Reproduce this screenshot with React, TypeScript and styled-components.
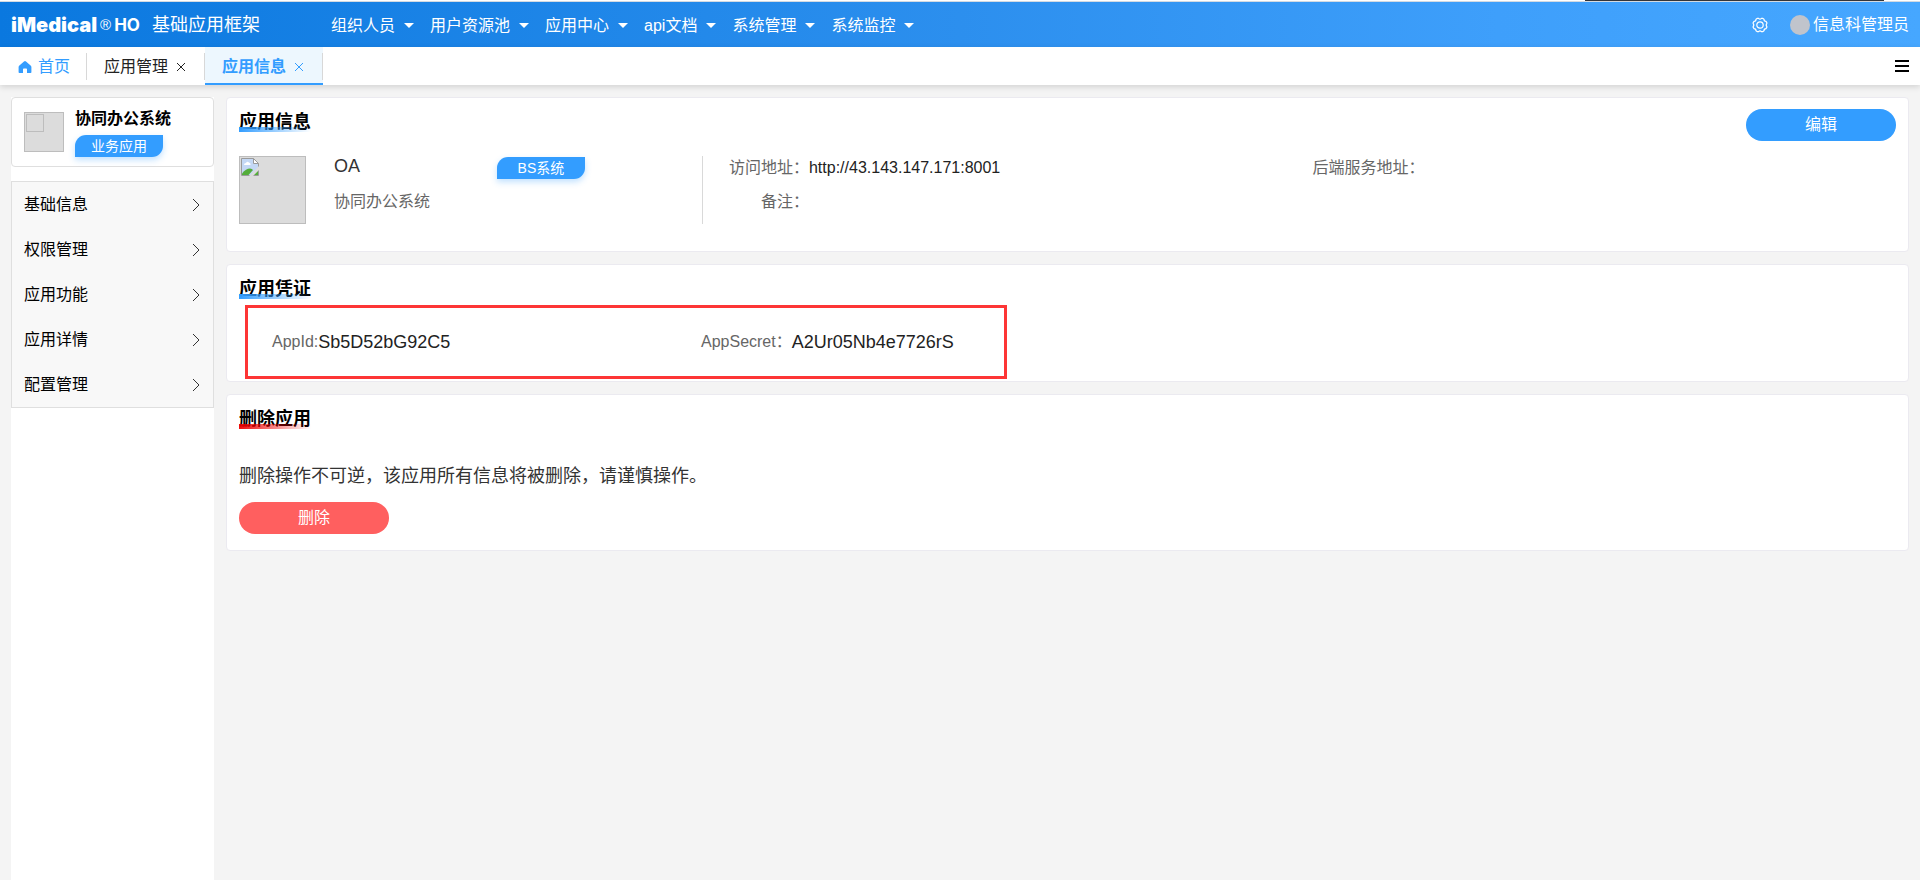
import React from "react";
import styled, { createGlobalStyle, css } from "styled-components";

const GlobalStyle = createGlobalStyle`
  *, *::before, *::after { box-sizing: border-box; }
  body {
    margin: 0;
    background: #f4f4f4;
    color: #000;
    font: 16px/24px "Liberation Sans", "Noto Sans CJK SC", sans-serif;
  }
  h1, h2, p, ul, dl, dd { margin: 0; padding: 0; }
  ul { list-style: none; }
  a { color: inherit; text-decoration: none; }
  button { font: inherit; border: 0; padding: 0; background: none; color: inherit; cursor: pointer; }
  svg { display: block; flex: none; }
`;

const Page = styled.div`
  display: flex;
  flex-direction: column;
  min-height: 100vh;
`;

const WindowEdge = styled.div`
  display: flex;
  justify-content: flex-end;
  height: 2px;
  padding-right: 36px;
  background: #fff;
  border-bottom: 1px solid #d3dae2;
`;

const WindowHandle = styled.span`
  width: 299px;
  background: #33353a;
`;

const Header = styled.header`
  display: flex;
  align-items: center;
  height: 45px;
  padding: 0 11px;
  color: #fff;
  background: linear-gradient(90deg, #0a78df 0%, #2c8fee 50%, #3e9ffb 78%, #46a7ff 100%);
`;

const Brand = styled.a`
  display: flex;
  align-items: center;
  width: 320px;
  white-space: nowrap;
`;

const BrandName = styled.span`
  font: 900 20px/24px Inter, "Liberation Sans", sans-serif;
`;

const BrandMark = styled.span`
  margin: 0 3px;
  font: 15px/20px "Liberation Sans", sans-serif;
`;

const BrandSuffix = styled.span`
  font: 700 17px/24px Inter, "Liberation Sans", sans-serif;
`;

const BrandTitle = styled.span`
  margin-left: 12px;
  font-size: 18px;
`;

const Nav = styled.nav`
  display: flex;
  flex: 1;
  gap: 16px;
  padding-top: 2px;
`;

const NavButton = styled.button`
  display: flex;
  align-items: center;
  gap: 9px;
  white-space: nowrap;
`;

const Caret = styled.span`
  border: 5px solid transparent;
  border-top-color: #fff;
  border-bottom: 0;
`;

const Tools = styled.div`
  display: flex;
  align-items: center;
  gap: 22px;
`;

const User = styled.button`
  display: flex;
  align-items: center;
  gap: 3px;
  white-space: nowrap;
`;

const Avatar = styled.span`
  width: 20px;
  height: 20px;
  border-radius: 50%;
  background: #c0c4cc;
`;

const TabBar = styled.div`
  display: flex;
  align-items: center;
  height: 38px;
  padding-right: 11px;
  background: #fff;
  box-shadow: 0 2px 6px rgba(0, 0, 0, 0.14);
`;

const Tabs = styled.nav`
  display: flex;
  flex: 1;
  align-self: stretch;
`;

const Tab = styled.div<{ $active?: boolean }>`
  display: flex;
  align-items: center;
  gap: 8px;
  padding: 1px 19px 0 17px;
  position: relative;
  color: #222;
  &::after {
    content: "";
    position: absolute;
    right: 0;
    top: 6px;
    bottom: 5px;
    width: 1px;
    background: #d8d8d8;
  }
  ${(p) =>
    p.$active &&
    css`
      color: #339dff;
      font-weight: 700;
      background: #edf7fe;
      box-shadow: inset 0 -2px #339dff;
    `}
`;

const HomeTab = styled(Tab)`
  gap: 6px;
  padding: 1px 17px 0 18px;
  color: #339dff;
`;

const Body = styled.div`
  display: flex;
  flex: 1;
  gap: 12px;
  padding: 12px 11px 0;
`;

const Sidebar = styled.aside`
  flex: none;
  width: 203px;
  background: #fff;
`;

const AppCard = styled.div`
  display: flex;
  gap: 11px;
  height: 70px;
  padding: 7px 12px;
  border: 1px solid #dfdfdf;
  border-radius: 4px;
`;

const AppName = styled.h1`
  margin-bottom: 2px;
  font-size: 16px;
  line-height: 28px;
`;

const Placeholder = styled.div<{ $small?: boolean }>`
  flex: none;
  width: ${(p) => (p.$small ? 40 : 67)}px;
  height: ${(p) => (p.$small ? 40 : 68)}px;
  margin-top: ${(p) => (p.$small ? 7 : 0)}px;
  padding: 1px;
  border: 1px solid #bdbdbd;
  background: #dcdcdc;
`;

const EmptyFrame = styled.span`
  display: block;
  width: 18px;
  height: 18px;
  border: 1px solid #bdbdbd;
`;

const Badge = styled.span`
  display: block;
  width: 88px;
  height: 22px;
  border-radius: 11px 0;
  color: #fff;
  background: #339dff;
  box-shadow: 0 3px 6px rgba(51, 157, 255, 0.3);
  font-size: 14px;
  line-height: 22px;
  text-align: center;
`;

const Menu = styled.ul`
  margin-top: 14px;
  border: 1px solid #dfdfdf;
  background: #f8f8f8;
`;

const MenuLink = styled.a`
  display: flex;
  align-items: center;
  justify-content: space-between;
  height: 45px;
  padding: 0 13px 0 12px;
`;

const Main = styled.main`
  display: flex;
  flex: 1;
  flex-direction: column;
  gap: 12px;
`;

const Card = styled.section`
  padding: 11px 12px;
  border: 1px solid #ebeaf0;
  border-radius: 4px;
  background: #fff;
`;

const CardHead = styled.div`
  display: flex;
  align-items: flex-start;
  justify-content: space-between;
`;

const Title = styled.h2<{ $danger?: boolean }>`
  position: relative;
  width: max-content;
  font-size: 18px;
  line-height: 26px;
  &::after {
    content: "";
    position: absolute;
    left: 0;
    right: 0;
    bottom: 3px;
    height: 5px;
    background: linear-gradient(
      90deg,
      ${(p) => (p.$danger ? "rgba(238,0,0,.95), rgba(238,0,0,0)" : "rgba(51,157,255,1), rgba(51,157,255,0)")}
    );
  }
`;

const PillButton = styled.button<{ $danger?: boolean }>`
  width: 150px;
  height: 32px;
  border-radius: 16px;
  color: #fff;
  background: ${(p) => (p.$danger ? "#ff5f5f" : "#339dff")};
`;

const Info = styled.div`
  display: flex;
  padding: 15px 0 16px;
`;

const Summary = styled.div`
  display: flex;
  width: 28%;
  padding-right: 117px;
  border-right: 1px solid #d9d9d9;
`;

const SummaryText = styled.div`
  flex: 1;
  margin-left: 28px;
  color: #666;
`;

const AppCode = styled.p`
  margin-bottom: 14px;
  color: #333;
  font-size: 18px;
  line-height: 20px;
`;

const SystemType = styled.div`
  padding-top: 1px;
`;

const Details = styled.dl`
  display: grid;
  flex: 1;
  grid-template-columns: 1fr 1fr;
  align-content: start;
  row-gap: 10px;
  padding-left: 26px;
`;

const Field = styled.div`
  display: flex;
`;

const Label = styled.dt<{ $wide?: boolean }>`
  min-width: ${(p) => (p.$wide ? 80 : 0)}px;
  color: #666;
  text-align: right;
`;

const Value = styled.dd<{ $large?: boolean }>`
  color: #222;
  font-size: ${(p) => (p.$large ? 18 : 16)}px;
`;

const CredentialCard = styled(Card)`
  padding-bottom: 2px;
`;

const Credentials = styled.dl`
  display: grid;
  grid-template-columns: 429px 1fr;
  align-items: center;
  width: 46%;
  height: 74px;
  margin: 3px 0 0 6px;
  padding-left: 24px;
  border: 3px solid #fd3535;
`;

const Warning = styled.p`
  margin: 32px 0 14px;
  color: #333;
  font-size: 18px;
`;

const DeleteCard = styled(Card)`
  padding-bottom: 16px;
`;

const IconButton = styled.button`
  display: block;
`;

const CloseIcon = () => (
  <svg width="10" height="10" viewBox="0 0 10 10" fill="none" stroke="currentColor" strokeWidth="1">
    <path d="M1 1l8 8M9 1L1 9" />
  </svg>
);

const HomeIcon = () => (
  <svg width="14" height="14" viewBox="0 0 14 14" fill="#339dff">
    <path d="M7 1Q7.5 1 8 1.5L12.6 5.4Q13.4 6 13.4 7V12.2Q13.4 13 12.6 13H9V9.2Q9 8.4 8.2 8.4H5.8Q5 8.4 5 9.2V13H1.4Q.6 13 .6 12.2V7Q.6 6 1.4 5.4L6 1.5Q6.5 1 7 1Z" />
  </svg>
);

const GearIcon = () => (
  <svg width="16" height="16" viewBox="0 0 16 16" fill="none" stroke="#fff" strokeWidth="1.2">
    <path
      strokeLinejoin="round"
      d="M5.4 1.3H6.6Q8 2.8 9.4 1.3H10.6L12 2.2Q12 4.3 14 4.4L15 6Q13.4 8 15 10L14 11.6Q12 11.7 12 13.8L10.6 14.7H9.4Q8 13.2 6.6 14.7H5.4L4 13.8Q4 11.7 2 11.6L1 10Q2.6 8 1 6L2 4.4Q4 4.3 4 2.2Z"
    />
    <circle cx="8" cy="8" r="3.2" />
  </svg>
);

const ListIcon = () => (
  <svg width="14" height="14" viewBox="0 0 14 14" fill="#000">
    <path d="M0 1h14v2H0zM0 6h14v2H0zM0 11h14v2H0z" />
  </svg>
);

const ChevronIcon = () => (
  <svg width="8" height="14" viewBox="0 0 8 14" fill="none" stroke="#333" strokeWidth="1">
    <path d="M1 1l6 6-6 6" />
  </svg>
);

const BrokenImageIcon = () => (
  <svg width="18" height="18" viewBox="0 0 18 18">
    <path d="M.5 .5H12.5L17.5 5.5V17.5H.5Z" fill="#c4d8f5" stroke="#9a9a9a" />
    <path d="M3 7Q3 5 5 5Q6 3 8 4.5Q10 5 9.5 7Z" fill="#fff" />
    <path d="M1 17V15.5Q5 10.5 9 10.5Q11 10.5 12 12L7.5 17Z" fill="#54ad3a" />
    <path d="M12.5 17L17 12.5V17Z" fill="#54ad3a" />
    <path d="M8 18L18 8V12L12 18Z" fill="#dcdcdc" />
    <path d="M12.5 .5V5.5H17.5Z" fill="#fff" stroke="#9a9a9a" />
  </svg>
);

const navItems = ["组织人员", "用户资源池", "应用中心", "api文档", "系统管理", "系统监控"];
const menuItems = ["基础信息", "权限管理", "应用功能", "应用详情", "配置管理"];

export default function App() {
  return (
    <Page>
      <GlobalStyle />
      <WindowEdge>
        <WindowHandle />
      </WindowEdge>
      <Header>
        <Brand href="#">
          <BrandName>iMedical</BrandName>
          <BrandMark>®</BrandMark>
          <BrandSuffix>HO</BrandSuffix>
          <BrandTitle>基础应用框架</BrandTitle>
        </Brand>
        <Nav>
          {navItems.map((item) => (
            <NavButton key={item}>
              {item}
              <Caret />
            </NavButton>
          ))}
        </Nav>
        <Tools>
          <IconButton aria-label="设置">
            <GearIcon />
          </IconButton>
          <User>
            <Avatar />
            信息科管理员
          </User>
        </Tools>
      </Header>
      <TabBar>
        <Tabs>
          <HomeTab>
            <HomeIcon />
            <a href="#home">首页</a>
          </HomeTab>
          <Tab>
            <a href="#apps">应用管理</a>
            <IconButton aria-label="关闭应用管理">
              <CloseIcon />
            </IconButton>
          </Tab>
          <Tab $active>
            <a href="#info">应用信息</a>
            <IconButton aria-label="关闭应用信息">
              <CloseIcon />
            </IconButton>
          </Tab>
        </Tabs>
        <IconButton aria-label="标签列表">
          <ListIcon />
        </IconButton>
      </TabBar>
      <Body>
        <Sidebar>
          <AppCard>
            <Placeholder $small>
              <EmptyFrame />
            </Placeholder>
            <div>
              <AppName>协同办公系统</AppName>
              <Badge>业务应用</Badge>
            </div>
          </AppCard>
          <Menu>
            {menuItems.map((item) => (
              <li key={item}>
                <MenuLink href="#">
                  {item}
                  <ChevronIcon />
                </MenuLink>
              </li>
            ))}
          </Menu>
        </Sidebar>
        <Main>
          <Card>
            <CardHead>
              <Title>应用信息</Title>
              <PillButton>编辑</PillButton>
            </CardHead>
            <Info>
              <Summary>
                <Placeholder>
                  <BrokenImageIcon />
                </Placeholder>
                <SummaryText>
                  <AppCode>OA</AppCode>
                  <p>协同办公系统</p>
                </SummaryText>
                <SystemType>
                  <Badge>BS系统</Badge>
                </SystemType>
              </Summary>
              <Details>
                <Field>
                  <Label $wide>访问地址：</Label>
                  <Value>http://43.143.147.171:8001</Value>
                </Field>
                <Field>
                  <Label>后端服务地址：</Label>
                </Field>
                <Field>
                  <Label $wide>备注：</Label>
                </Field>
              </Details>
            </Info>
          </Card>
          <CredentialCard>
            <Title>应用凭证</Title>
            <Credentials>
              <Field>
                <Label>AppId:</Label>
                <Value $large>Sb5D52bG92C5</Value>
              </Field>
              <Field>
                <Label>AppSecret：</Label>
                <Value $large>A2Ur05Nb4e7726rS</Value>
              </Field>
            </Credentials>
          </CredentialCard>
          <DeleteCard>
            <Title $danger>删除应用</Title>
            <Warning>删除操作不可逆，该应用所有信息将被删除，请谨慎操作。</Warning>
            <PillButton $danger>删除</PillButton>
          </DeleteCard>
        </Main>
      </Body>
    </Page>
  );
}
